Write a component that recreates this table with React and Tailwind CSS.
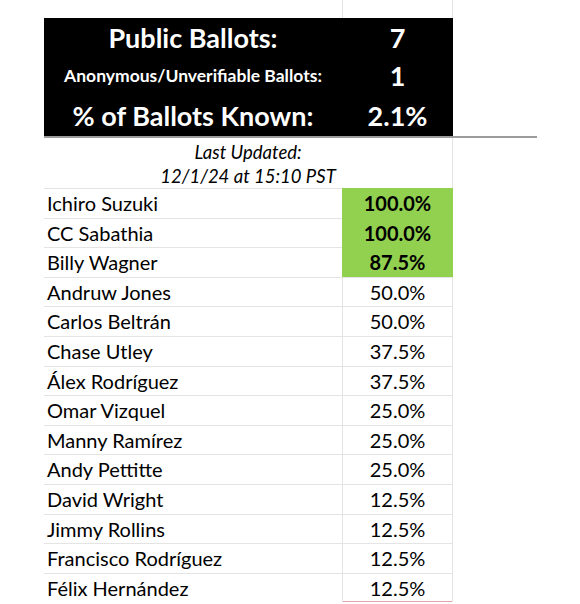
import React from 'react';

const rows = [
    { name: 'Ichiro Suzuki', pct: '100.0%', elected: true },
    { name: 'CC Sabathia', pct: '100.0%', elected: true },
    { name: 'Billy Wagner', pct: '87.5%', elected: true },
    { name: 'Andruw Jones', pct: '50.0%' },
    { name: 'Carlos Beltrán', pct: '50.0%' },
    { name: 'Chase Utley', pct: '37.5%' },
    { name: 'Álex Rodríguez', pct: '37.5%' },
    { name: 'Omar Vizquel', pct: '25.0%' },
    { name: 'Manny Ramírez', pct: '25.0%' },
    { name: 'Andy Pettitte', pct: '25.0%' },
    { name: 'David Wright', pct: '12.5%' },
    { name: 'Jimmy Rollins', pct: '12.5%' },
    { name: 'Francisco Rodríguez', pct: '12.5%' },
    { name: 'Félix Hernández', pct: '12.5%' },
];

const App = () => {
    return (
        <div className="w-[580px] h-[604px] overflow-hidden bg-white text-black font-['Lato',sans-serif]">
            <div className="ml-[44px] w-[409px]">
                {/* empty sheet row above the header */}
                <div className="flex h-[18px]">
                    <div className="w-[298px]" />
                    <div className="flex-1 border-x border-[#e4e4e4]" />
                </div>

                {/* black summary block */}
                <div className="bg-black text-white font-bold">
                    <div className="flex h-[38px] items-center text-[27px] leading-none">
                        <div className="w-[298px] text-center">Public Ballots:</div>
                        <div className="flex-1 text-center">7</div>
                    </div>
                    <div className="flex h-[39px] items-center">
                        <div className="w-[298px] text-center text-[17.5px] leading-none">Anonymous/Unverifiable Ballots:</div>
                        <div className="flex-1 text-center text-[27px] leading-none">1</div>
                    </div>
                    <div className="flex h-[41px] items-center text-[27px] leading-none">
                        <div className="w-[298px] text-center">% of Ballots Known:</div>
                        <div className="flex-1 text-center">2.1%</div>
                    </div>
                </div>
            </div>

            <div className="ml-[44px] w-[493px] h-[2px] bg-[#9c9c9c]" />

            <div className="ml-[44px] w-[409px]">
                <div className="h-[50px] pt-[2px] border-r border-[#e4e4e4] text-center italic text-[18.5px] leading-[24px]">
                    <div>Last Updated:</div>
                    <div>12/1/24 at 15:10 PST</div>
                </div>

                {rows.map((row, i) => (
                    <div key={row.name} className="flex h-[29.6px] text-[20px] leading-[28.6px]">
                        <div className="w-[298px] pl-[3px] border-t border-[#e4e4e4]">{row.name}</div>
                        <div
                            className={
                                row.elected
                                    ? 'flex-1 text-center font-bold bg-[#92d050] border-t border-[#92d050]'
                                    : i === rows.length - 1
                                        ? 'flex-1 text-center border-t border-l border-r border-[#e4e4e4] shadow-[inset_0_-1px_0_#e2a2aa]'
                                        : 'flex-1 text-center border-t border-x border-[#e4e4e4]'
                            }
                        >
                            {row.pct}
                        </div>
                    </div>
                ))}
            </div>
        </div>
    );
};

export default App;
